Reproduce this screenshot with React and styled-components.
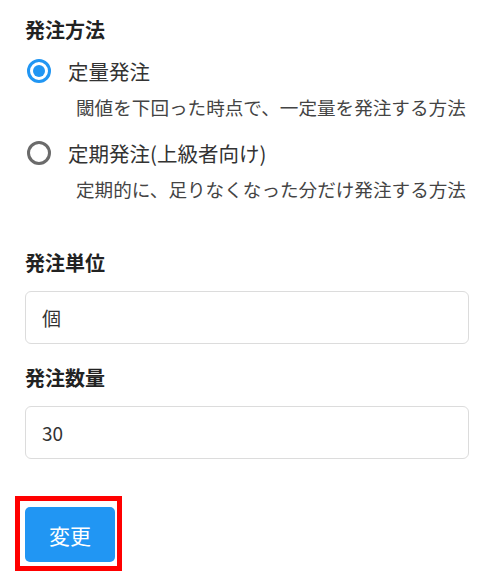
import styled, { createGlobalStyle } from "styled-components";
import { useState } from "react";

const GlobalStyle = createGlobalStyle`
  body {
    margin: 0;
    background: #fff;
    font-family: "Noto Sans CJK JP", "Noto Sans", sans-serif;
    color: #333;
  }
`;

const opcoes = [
  { id: "fixed", label: "定量発注", desc: "閾値を下回った時点で、一定量を発注する方法" },
  { id: "periodic", label: "定期発注(上級者向け)", desc: "定期的に、足りなくなった分だけ発注する方法" },
];

export default function App() {
  const [metodo, setMetodo] = useState("fixed");
  const [unidade, setUnidade] = useState("個");
  const [quantidade, setQuantidade] = useState("30");

  return (
    <Tela>
      <GlobalStyle />
      <Titulo>発注方法</Titulo>
      <Grupo>
        {opcoes.map(op => (
          <Opcao key={op.id}>
            <Linha onClick={() => setMetodo(op.id)}>
              <Radio $checked={metodo === op.id} />
              <RotuloOpcao>{op.label}</RotuloOpcao>
            </Linha>
            <Descricao>{op.desc}</Descricao>
          </Opcao>
        ))}
      </Grupo>

      <Campos>
        <Campo>
          <Titulo>発注単位</Titulo>
          <Entrada value={unidade} onChange={e => setUnidade(e.target.value)} />
        </Campo>
        <Campo>
          <Titulo>発注数量</Titulo>
          <Entrada value={quantidade} onChange={e => setQuantidade(e.target.value)} />
        </Campo>
      </Campos>

      <Destaque>
        <Botao type="button">変更</Botao>
      </Destaque>
    </Tela>
  );
}

const Tela = styled.div`
  display: flex;
  flex-direction: column;
  align-items: flex-start;
  padding: 16px 22px 0 25px;
`;

const Titulo = styled.h2`
  margin: 0;
  font-size: 20px;
  line-height: 28px;
  font-weight: 700;
  color: #222;
`;

const Grupo = styled.div`
  display: flex;
  flex-direction: column;
  gap: 18px;
  margin-top: 13px;
`;

const Opcao = styled.div`
  display: flex;
  flex-direction: column;
  gap: 8px;
`;

const Linha = styled.label`
  display: flex;
  align-items: center;
  height: 28px;
  gap: 17px;
  cursor: pointer;
`;

const Radio = styled.span`
  box-sizing: border-box;
  width: 24px;
  height: 24px;
  margin-left: 2px;
  border-radius: 50%;
  border: 3px solid ${p => (p.$checked ? "#2196f3" : "#6b6b6b")};
  display: flex;
  align-items: center;
  justify-content: center;
  &::after {
    content: "";
    width: 12px;
    height: 12px;
    border-radius: 50%;
    background: ${p => (p.$checked ? "#2196f3" : "transparent")};
  }
`;

const RotuloOpcao = styled.span`
  font-size: 20.5px;
  line-height: 28px;
  color: #333;
`;

const Descricao = styled.p`
  margin: 0 0 0 51px;
  font-size: 18.6px;
  line-height: 28px;
  color: #444;
  white-space: nowrap;
`;

const Campos = styled.div`
  display: flex;
  flex-direction: column;
  gap: 20px;
  margin-top: 46px;
  align-self: stretch;
`;

const Campo = styled.div`
  display: flex;
  flex-direction: column;
  gap: 14px;
`;

const Entrada = styled.input`
  box-sizing: border-box;
  width: 100%;
  height: 53px;
  border: 1.5px solid #dcdcdc;
  border-radius: 6px;
  padding: 0 16px;
  font-family: "Noto Sans CJK JP", "Noto Sans", sans-serif;
  font-size: 19px;
  color: #333;
  outline: none;
`;

const Destaque = styled.div`
  margin: 37px 0 0 -10px;
  border: 5px solid #ff0000;
  padding: 6px 2px 4px 5px;
`;

const Botao = styled.button`
  display: flex;
  align-items: center;
  justify-content: center;
  width: 90px;
  height: 55px;
  border: none;
  border-radius: 5px;
  background: #2196f3;
  color: #fff;
  font-family: "Noto Sans CJK JP", "Noto Sans", sans-serif;
  font-size: 21px;
  cursor: pointer;
`;
